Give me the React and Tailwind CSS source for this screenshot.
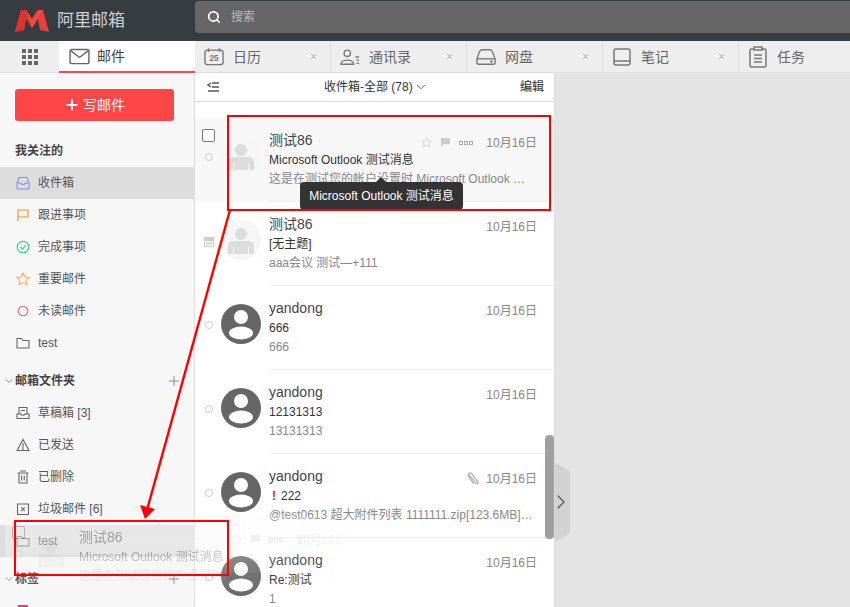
import { Search, X, Plus, ChevronDown, ChevronRight } from 'lucide-react';

const font = "font-['Liberation_Sans','Noto_Sans_CJK_SC',sans-serif]";

function Logo() {
  return (
    <svg width="34" height="22" viewBox="0 0 34 22" className="shrink-0">
      <path d="M0 22 L6 0 H11 L17 9 L23 0 H28 L34 22 L25 20 L23 9 L17 18 L11 9 L9 20 Z" fill="#e8403a" />
      <path d="M6 0 H11 L17 9 V18 L11 9 L9 20 L0 22 Z" fill="#d8352f" />
      <path d="M11 0 L17 9 L23 0 L28 0 L17 18 Z" fill="#ee4a40" />
    </svg>
  );
}

// tab icons
function MailIcon() {
  return (
    <svg width="21" height="17" viewBox="0 0 22 18" fill="none" stroke="#666" strokeWidth="1.5">
      <rect x="1" y="1.5" width="20" height="15" rx="2" />
      <path d="M2 3 L11 10 L20 3" />
    </svg>
  );
}
function CalendarIcon() {
  return (
    <svg width="21" height="19" viewBox="0 0 22 20" fill="none">
      <rect x="1" y="3" width="20" height="16" rx="3" stroke="#777" strokeWidth="1.5" />
      <path d="M5 1v4M17 1v4" stroke="#777" strokeWidth="1.5" />
      <text x="11" y="15" textAnchor="middle" fontSize="9" fontWeight="700" fill="#777" fontFamily="Liberation Sans">25</text>
    </svg>
  );
}
function ContactIcon() {
  return (
    <svg width="21" height="18" viewBox="0 0 22 18" fill="none" stroke="#777" strokeWidth="1.5">
      <circle cx="8" cy="5" r="3.5" />
      <path d="M1 17 C1 11 15 11 15 17 Z" />
      <path d="M17 9h4M18 12.5h3M18 16h3" />
    </svg>
  );
}
function DiskIcon() {
  return (
    <svg width="21" height="18" viewBox="0 0 22 18" fill="none" stroke="#777" strokeWidth="1.5">
      <path d="M1 11 L4 3 Q5 1 7 1 H15 Q17 1 18 3 L21 11 V15 Q21 17 19 17 H3 Q1 17 1 15 Z" />
      <path d="M1 11 H21" />
      <circle cx="17" cy="14" r="0.6" fill="#777" />
    </svg>
  );
}
function NoteIcon() {
  return (
    <svg width="18" height="20" viewBox="0 0 18 20" fill="none" stroke="#777" strokeWidth="1.5">
      <rect x="1" y="2" width="16" height="16" rx="2" />
      <path d="M1 14 H17" />
    </svg>
  );
}
function TaskIcon() {
  return (
    <svg width="18" height="22" viewBox="0 0 18 22" fill="none" stroke="#777" strokeWidth="1.5">
      <rect x="1" y="3" width="16" height="18" rx="1.5" />
      <rect x="5" y="1" width="8" height="3" fill="#eee" />
      <path d="M5 9 H13 M5 12.5 H13 M5 16 H13" />
    </svg>
  );
}

function Tab({ icon, label, width, close = true }) {
  return (
    <div className={`flex h-full items-center border-r border-[#ddd] ${width}`}>
      <div className="ml-[9px] flex w-[20px] justify-center">{icon}</div>
      <span className="ml-[9px] text-sm text-[#666]">{label}</span>
      {close && <X className="ml-auto mr-[12px] text-[#777]" size={9} strokeWidth={1.5} />}
    </div>
  );
}

// sidebar icons
const side = { width: 14, height: 14, viewBox: '0 0 14 14', fill: 'none', strokeWidth: 1.1 };
const icons = {
  inbox: (
    <svg {...side} stroke="#7d93e8">
      <path d="M1 7 L3 1.5 H11 L13 7 V12 Q13 13 12 13 H2 Q1 13 1 12 Z" />
      <path d="M1 7 H4 Q7 10 10 7 H13" />
    </svg>
  ),
  flag: (
    <svg {...side} stroke="#f78b2d">
      <path d="M2 13 V2 H12 V9 H2" />
    </svg>
  ),
  check: (
    <svg {...side} stroke="#2fcb71">
      <circle cx="7" cy="7" r="5.8" />
      <path d="M4.5 7 L6.5 9 L9.8 5.3" />
    </svg>
  ),
  star: (
    <svg {...side} stroke="#f5b462">
      <path d="M7 1 L8.8 5 L13.2 5.5 L10 8.4 L10.9 12.8 L7 10.6 L3.1 12.8 L4 8.4 L0.8 5.5 L5.2 5 Z" />
    </svg>
  ),
  unread: (
    <svg {...side} stroke="#f0616d">
      <circle cx="7" cy="7" r="4.8" />
    </svg>
  ),
  folder: (
    <svg {...side} stroke="#666">
      <path d="M1 12 V2.5 H5.5 L7 4.5 H13 V12 Z" />
    </svg>
  ),
  draft: (
    <svg {...side} stroke="#666">
      <path d="M3 8 V1.5 H11 V8" />
      <path d="M1 8 H4.5 Q7 10.5 9.5 8 H13 V12.5 H1 Z" />
      <path d="M5 4.5 H9" />
    </svg>
  ),
  sent: (
    <svg {...side} stroke="#666">
      <path d="M7 1.5 L13 12.5 H1 Z" />
      <path d="M7 5 V12.5" />
    </svg>
  ),
  trash: (
    <svg {...side} stroke="#666">
      <path d="M1.5 3 H12.5 M4 1 H10 M3 3 V13 H11 V3 M5.7 5.5 V10.5 M8.3 5.5 V10.5" />
    </svg>
  ),
  junk: (
    <svg {...side} stroke="#666">
      <path d="M1.5 2 H12.5 V12.5 H1.5 Z M5.3 5.5 L8.7 9 M8.7 5.5 L5.3 9" />
    </svg>
  ),
};

function SideItem({ icon, label, active }) {
  return (
    <div className={`flex h-8 items-center pl-[16px] ${active ? 'bg-[#dddddd]' : ''}`}>
      <span className="flex w-[22px] shrink-0">{icons[icon]}</span>
      <span className="text-xs text-[#555]">{label}</span>
    </div>
  );
}

function SideTitle({ label }) {
  return (
    <div className="flex h-[38px] items-center pl-[3px] pr-[12px] pt-[6px]">
      <ChevronDown size={12} strokeWidth={1.5} className="text-[#666]" />
      <span className="text-xs font-semibold text-[#444]">{label}</span>
      <Plus size={16} strokeWidth={1.5} className="ml-auto text-[#6f93bb]" />
    </div>
  );
}

function Avatar({ light }) {
  if (light) {
    return (
      <svg width="40" height="40" viewBox="0 0 40 40" className="shrink-0">
        <circle cx="20" cy="20" r="20" fill="#f6f6f6" />
        <circle cx="20" cy="14" r="6" fill="#dcdcdc" />
        <path d="M7 34 V26 Q7 21 13 21 H27 Q33 21 33 26 V34 H28 V27 H27 V34 H13 V27 H12 V34 Z" fill="#dcdcdc" />
      </svg>
    );
  }
  return (
    <svg width="40" height="40" viewBox="0 0 40 40" className="shrink-0">
      <circle cx="20" cy="20" r="20" fill="#666" />
      <circle cx="20" cy="13" r="7" fill="#fff" />
      <ellipse cx="20" cy="29" rx="12" ry="6.5" fill="#fff" />
    </svg>
  );
}

function MailRow({ name, subject, preview, light, hover, cal, clip, important }) {
  return (
    <div className={`flex h-[84px] w-[359px] ${hover ? 'bg-[#f7f7f7]' : ''}`}>
      <div className="relative w-[26px] shrink-0">
        {hover && <div className="absolute left-[7px] top-[11px] h-[13px] w-[13px] rounded-[2px] border border-[#777] bg-white" />}
        {cal ? (
          <svg width="10" height="10" viewBox="0 0 10 10" className="absolute left-[9px] top-[35px]">
            <path d="M0 0 H10 V10 H0 Z M1 4 V9 H9 V4 Z" fill="#ccc" />
            <rect x="2" y="5" width="6" height="3" fill="#ddd" />
          </svg>
        ) : (
          <div className="absolute left-[10px] top-[35px] h-[8px] w-[8px] rounded-full border border-[#ccc]" />
        )}
      </div>
      <div className="mt-[18px]">
        <Avatar light={light} />
      </div>
      <div className="ml-[8px] flex min-w-0 flex-1 flex-col border-b border-[#eee] pr-[17px] pt-[12px]">
        <div className="flex h-[20px] items-center">
          <span className="text-sm text-[#444]">{name}</span>
          <div className="ml-auto mt-[5px] flex items-center">
            {hover && (
              <>
                <svg width="11" height="11" viewBox="0 0 14 14" fill="none" stroke="#ccc" className="mr-[9px]">
                  <path d="M7 1 L8.8 5 L13.2 5.5 L10 8.4 L10.9 12.8 L7 10.6 L3.1 12.8 L4 8.4 L0.8 5.5 L5.2 5 Z" />
                </svg>
                <svg width="9" height="9" viewBox="0 0 10 10" className="mr-[9px]">
                  <path d="M0 0 H10 V7 H3 L0 10 Z" fill="#ccc" />
                </svg>
                <span className="mr-[13px] flex gap-[1px]">
                  <i className="h-[4px] w-[4px] border border-[#aaa]" />
                  <i className="h-[4px] w-[4px] border border-[#aaa]" />
                  <i className="h-[4px] w-[4px] border border-[#aaa]" />
                </span>
              </>
            )}
            {clip && (
              <svg width="12" height="14" viewBox="0 0 12 14" fill="none" stroke="#bbb" strokeWidth="1.5" className="mr-[7px]">
                <path d="M2 3 L9 11 Q11 13 11 10 L5 2 Q3 0 1.5 2 Q0.5 3.5 2 5 L7 12" />
              </svg>
            )}
            <span className="text-xs text-[#888]">10月16日</span>
          </div>
        </div>
        <div className="flex h-[19px] items-center text-xs text-[#333]">
          {important && <span className="ml-[3px] w-[9px] font-bold text-[#e0202f]">!</span>}
          {subject}
        </div>
        <div className="mt-[1px] w-[264px] truncate text-xs leading-[19px] text-[#888]">{preview}</div>
      </div>
    </div>
  );
}

export default function App() {
  return (
    <div className={`relative h-[607px] w-[850px] overflow-hidden bg-[#e4e4e4] ${font}`}>
      {/* Top bar */}
      <div className="flex h-[41px] items-center bg-[#373c41]">
        <div className="flex w-[195px] items-center pl-[15px]">
          <Logo />
          <span className="ml-[8px] text-[17px] leading-none text-[#d0d0d0]">阿里邮箱</span>
        </div>
        <div className="mb-[7px] flex h-[32px] flex-1 items-center rounded-l-[4px] bg-[#666666] pl-[12px]">
          <Search size={14} strokeWidth={3} className="text-white" />
          <span className="ml-[10px] text-xs text-[#bbb]">搜索</span>
        </div>
      </div>

      {/* Tabs */}
      <div className="flex h-[32px] border-b border-[#ddd] bg-[#eeeeee]">
        <div className="flex h-full w-[59px] items-center justify-center">
          <div className="grid grid-cols-3 gap-[2px]">
            {[0, 1, 2, 3, 4, 5, 6, 7, 8].map((i) => (
              <i key={i} className="h-[4px] w-[4px] bg-[#666]" />
            ))}
          </div>
        </div>
        <div className="flex h-[32px] w-[136px] items-center border-b-2 border-[#ff4646] bg-white pl-[10px]">
          <MailIcon />
          <span className="ml-[7px] text-sm text-[#444]">邮件</span>
        </div>
        <Tab icon={<CalendarIcon />} label="日历" width="w-[136px]" />
        <Tab icon={<ContactIcon />} label="通讯录" width="w-[136px]" />
        <Tab icon={<DiskIcon />} label="网盘" width="w-[136px]" />
        <Tab icon={<NoteIcon />} label="笔记" width="w-[136px]" />
        <Tab icon={<TaskIcon />} label="任务" width="flex-1 border-r-0" close={false} />
      </div>

      <div className="flex h-[534px]">
        {/* Sidebar */}
        <div className="w-[195px] shrink-0 overflow-hidden border-r border-[#ddd] bg-[#f7f7f7]">
          <div className="mx-[15px] mt-[16px] flex h-[32px] w-[159px] items-center justify-center rounded-[3px] bg-[#ff4646] text-sm text-white">
            <Plus size={16} strokeWidth={3} className="mr-[3px]" />
            写邮件
          </div>
          <div className="flex h-[46px] items-center pl-[15px] pt-[13px] text-xs font-semibold text-[#444]">我关注的</div>
          <SideItem icon="inbox" label="收件箱" active />
          <SideItem icon="flag" label="跟进事项" />
          <SideItem icon="check" label="完成事项" />
          <SideItem icon="star" label="重要邮件" />
          <SideItem icon="unread" label="未读邮件" />
          <SideItem icon="folder" label="test" />
          <SideTitle label="邮箱文件夹" />
          <SideItem icon="draft" label="草稿箱 [3]" />
          <SideItem icon="sent" label="已发送" />
          <SideItem icon="trash" label="已删除" />
          <SideItem icon="junk" label="垃圾邮件 [6]" />
          <SideItem icon="folder" label="test" active />
          <SideTitle label="标签" />
          <div className="ml-[18px] mt-[10px] h-[10px] w-[10px] bg-[#e6398a]" />
        </div>

        {/* Mail list */}
        <div className="relative w-[360px] shrink-0 overflow-hidden border-r border-[#ddd] bg-white">
          <div className="flex h-[29px] items-center border-b border-[#ddd] bg-white">
            <svg width="12" height="10" viewBox="0 0 12 10" stroke="#555" strokeWidth="1.4" fill="none" className="ml-[12px]">
              <path d="M4 1 L1 3 L4 5 M5 1 H12 M5 5 H12 M1 9 H12" />
            </svg>
            <div className="ml-[105px] flex items-center text-xs text-[#333]">
              收件箱-全部 (78)
              <ChevronDown size={14} strokeWidth={1.3} className="ml-[1px]" />
            </div>
            <span className="ml-auto mr-[10px] text-xs font-medium text-[#444]">编辑</span>
          </div>
          <div className="pt-[16px]">
            <MailRow hover light name="测试86" subject="Microsoft Outlook 测试消息" preview="这是在测试您的帐户设置时 Microsoft Outlook 自动发送的邮件" />
            <MailRow light cal name="测试86" subject="[无主题]" preview="aaa会议 测试—+111" />
            <MailRow name="yandong" subject="666" preview="666" />
            <MailRow name="yandong" subject="12131313" preview="13131313" />
            <MailRow clip important name="yandong" subject="222" preview="@test0613 超大附件列表 1111111.zip[123.6MB]下载地址" />
            <MailRow name="yandong" subject="Re:测试" preview="1" />
          </div>
          {/* Scrollbar */}
          <div className="absolute left-[350px] top-[362px] h-[104px] w-[9px] rounded-[4px] bg-[#a0a0a0]" />
        </div>

        {/* Collapse handle */}
        <div className="relative flex-1">
          <svg width="16" height="80" viewBox="0 0 16 80" className="absolute left-0 top-[390px]">
            <path d="M0 0 L15 8 V70 L0 79 Z" fill="#d2d2d2" />
          </svg>
          <ChevronRight size={24} strokeWidth={1.3} className="absolute left-[-6px] top-[417px] text-[#555]" />
        </div>
      </div>

      {/* Tooltip */}
      <div className="absolute left-[300px] top-[182px] flex h-[28px] w-[163px] items-center justify-center rounded-[4px] bg-[#333333] text-xs text-white">
        <div className="absolute left-[76px] top-[-5px] h-0 w-0 border-x-[5px] border-b-[5px] border-x-transparent border-b-[#333333]" />
        Microsoft Outlook 测试消息
      </div>

      {/* Dragged row ghost */}
      <div className="pointer-events-none absolute left-[5px] top-[515px] opacity-[0.42] [mask-image:linear-gradient(to_bottom,black_30%,transparent_100%)]">
        <div className="[mask-image:linear-gradient(to_right,black_55%,transparent_100%)]">
          <MailRow hover light name="测试86" subject="Microsoft Outlook 测试消息" preview="这是在测试您的帐户设置时 Microsoft Outlook 自动发送的邮件" />
        </div>
      </div>

      {/* Red annotations */}
      <div className="pointer-events-none absolute left-[227px] top-[115px] h-[96px] w-[324px] border-2 border-[#ff0000]" />
      <div className="pointer-events-none absolute left-[14px] top-[520px] h-[56px] w-[215px] border-2 border-[#ff0000]" />
      <svg width="850" height="607" className="pointer-events-none absolute left-0 top-0">
        <line x1="230" y1="210" x2="147" y2="510" stroke="#ff0000" strokeWidth="2.4" />
        <path d="M140 505 L155 509 L145 519 Z" fill="#ff0000" />
      </svg>
    </div>
  );
}
